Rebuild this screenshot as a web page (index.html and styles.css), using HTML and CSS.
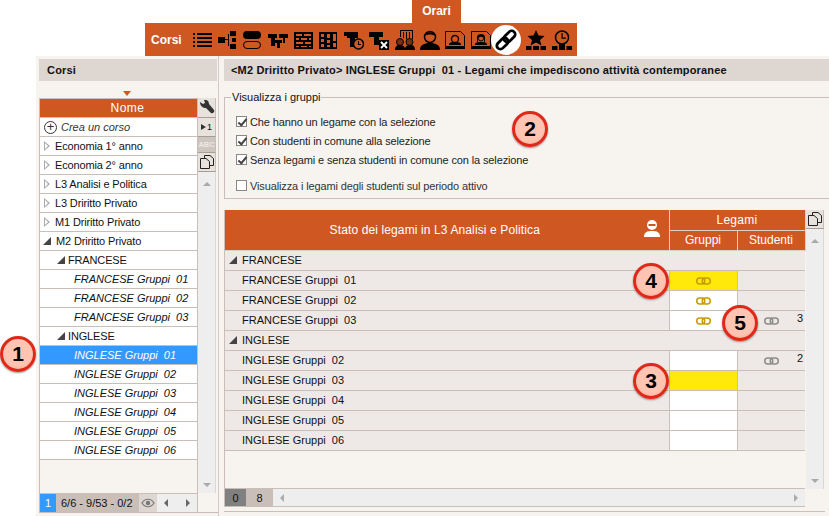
FILE: index.html
```html
<!DOCTYPE html>
<html lang="en">
<head>
    <meta charset="UTF-8">
    <title>Orari - Corsi</title>
    <link rel="stylesheet" href="styles.css">
</head>
<body>
    <svg class="defs" width="0" height="0">
        <symbol id="chain" viewBox="0 0 15 8">
            <rect x="0.75" y="1" width="8" height="6" rx="3" fill="none" stroke="currentColor" stroke-width="1.500"/>
            <rect x="6.25" y="1" width="8" height="6" rx="3" fill="none" stroke="currentColor" stroke-width="1.500"/>
        </symbol>
        <symbol id="copy" viewBox="0 0 14 14">
            <path d="M4.500 3.500V.5H10L13.500 3.500V10.500H9.500M.5 3.500H6L9.500 6.500V13.500H.5Z" fill="none" stroke="#222"/>
        </symbol>
    </svg>

    <div class="top">
        <div class="tab">Orari</div>
        <div class="toolbar">
            <span class="toolbar-title">Corsi</span>
            <!-- liste -->
            <svg class="tool" viewBox="0 0 20 20"><path d="M1 3h2v2H1zM5 3h15v2H5zM1 7h2v2H1zM5 7h15v2H5zM1 11h2v2H1zM5 11h15v2H5zM1 15h2v2H1zM5 15h15v2H5z"/></svg>
            <svg class="tool" viewBox="0 0 20 20"><path d="M1 7h7v6H1zM8 9h4v1H8zM11 4h1v12h-1zM13 1h6v5h-6zM15 8h4v4h-4zM13 14h6v5h-6z"/></svg>
            <svg class="tool" viewBox="0 0 20 20"><rect x="1" y="1" width="18" height="8" rx="4"/><rect x="1.500" y="11.500" width="17" height="7" rx="3.500" fill="none" stroke="#000"/></svg>
            <svg class="tool" viewBox="0 0 20 20"><path d="M0 4h9v4H7v8H3V8H0zM11 4h9v4h-3v5h-2V8h-4zM7 10h7v3h-2v5H9v-5H7z"/></svg>
            <svg class="tool" viewBox="0 0 20 20"><path d="M1 2h19v17H1zM3 4v2h6V4zM11 4v2h7V4zM3 8v2h3V8zM8 8v2h6V8zM16 8v2h2V8zM3 12v2h7v-2zM12 12v2h6v-2zM3 16v1h3v-1zM8 16v1h6v-1zM16 16v1h2v-1z" fill-rule="evenodd"/></svg>
            <svg class="tool" viewBox="0 0 20 20"><path d="M1 2h18v17H1zM3 4v3h3V4zM9 4v4h3V4zM15 4v7h3V4zM3 9v3h3V9zM9 10v3h3v-3zM3 14v3h3v-3zM9 15v2h3v-2zM15 13v4h3v-4z" fill-rule="evenodd"/></svg>
            <svg class="tool" viewBox="0 0 20 20"><path d="M0 2h14v6h-3v9H6V8H3V6H0z"/><circle cx="14.500" cy="14" r="5" fill="#cf5722" stroke="#000" stroke-width="1.500"/><path d="M14 11h1v3h2v1h-3z"/></svg>
            <svg class="tool" viewBox="0 0 20 20"><path d="M0 2h14v5h-4v8H5V7H0z"/><path d="M10 10h10v10H10z"/><path d="M12 12l6 6M18 12l-6 6" stroke="#fff" stroke-width="1.800"/></svg>
            <svg class="tool" viewBox="0 0 20 20"><path d="M5 0h13v9h-1V1H6v6H5zM8 2h1v6H8zM11 2h1v7h-1zM14 2h1v7h-1z"/><circle cx="5" cy="12" r="3.500" fill="#7a2e10" stroke="#000"/><circle cx="14.500" cy="12" r="3.500" fill="#7a2e10" stroke="#000"/><path d="M0 20c0-4 2-5 5-5s4 1 5 3c1-2 2-3 5-3s5 1 5 5z"/></svg>
            <svg class="tool" viewBox="0 0 20 20"><circle cx="10" cy="7" r="5.500" fill="#cf5722" stroke="#000" stroke-width="1.500"/><path d="M4.500 6c1-5 10-5 11 0-3-2-8-2-11 0z"/><path d="M0 20c0-5 4-7 10-7s10 2 10 7z"/></svg>
            <svg class="tool" viewBox="0 0 20 20"><path d="M.5 1.500h15l4 4v11H.5z" fill="#cf5722" stroke="#000"/><circle cx="10" cy="9" r="3.500" fill="none" stroke="#000" stroke-width="1.300"/><path d="M4 15c0-3 3-3 6-3s6 0 6 3z"/><path d="M0 17h20v2H0z"/></svg>
            <svg class="tool" viewBox="0 0 20 20"><path d="M.5 1.500h15l4 4v11H.5z" fill="#cf5722" stroke="#000"/><path d="M6 12V7c0-4 8-4 8 0v5h-1V8c0-2-6-2-6 0v4z"/><circle cx="10" cy="8.500" r="2.500" fill="none" stroke="#000"/><path d="M4 15c0-3 3-3 6-3s6 0 6 3z"/><path d="M0 17h20v2H0z"/></svg>
            <span class="tool-active">
                <svg width="24" height="24" viewBox="0 0 24 24"><g transform="rotate(-45 12 12)" fill="none" stroke="#000" stroke-width="2.800"><rect x="0.500" y="8.500" width="13" height="7" rx="3.500"/><rect x="10.500" y="8.500" width="13" height="7" rx="3.500"/></g></svg>
            </span>
            <svg class="tool" viewBox="0 0 20 20"><path d="M10 0l2.500 5.500 6 .5-4.500 4 1.500 5.500-5.500-3-5.500 3L6 10 1.500 6l6-.5zM0 16h5.500v4H0zM7 16h6v4H7zM14.500 16H20v4h-5.500z"/></svg>
            <svg class="tool" viewBox="0 0 20 20"><circle cx="10" cy="7.500" r="6.500" fill="none" stroke="#000" stroke-width="1.500"/><path d="M9.500 3h1.200v4.500H14v1.200H9.500zM0 16h5.500v4H0zM7 16h6v4H7zM14.500 16H20v4h-5.500zM7 13.500h6V16H7z"/></svg>
        </div>
    </div>

    <div class="main">
        <div class="left">
            <div class="panel-title">Corsi</div>
            <div class="sort-arrow"></div>
            <div class="list-wrap">
                <div class="list">
                    <div class="list-head">Nome</div>
                    <div class="list-body">
                        <div class="row create"><span class="plus">+</span>Crea un corso</div>
                        <div class="row"><span class="tri-open"></span>Economia 1° anno</div>
                        <div class="row"><span class="tri-open"></span>Economia 2° anno</div>
                        <div class="row"><span class="tri-open"></span>L3 Analisi e Politica</div>
                        <div class="row"><span class="tri-open"></span>L3 Driritto Privato</div>
                        <div class="row"><span class="tri-open"></span>M1 Driritto Privato</div>
                        <div class="row"><span class="tri-down"></span>M2 Driritto Privato</div>
                        <div class="row sub"><span class="tri-down"></span>FRANCESE</div>
                        <div class="row group">FRANCESE Gruppi&nbsp; 01</div>
                        <div class="row group">FRANCESE Gruppi&nbsp; 02</div>
                        <div class="row group">FRANCESE Gruppi&nbsp; 03</div>
                        <div class="row sub"><span class="tri-down"></span>INGLESE</div>
                        <div class="row group selected">INGLESE Gruppi&nbsp; 01</div>
                        <div class="row group">INGLESE Gruppi&nbsp; 02</div>
                        <div class="row group">INGLESE Gruppi&nbsp; 03</div>
                        <div class="row group">INGLESE Gruppi&nbsp; 04</div>
                        <div class="row group">INGLESE Gruppi&nbsp; 05</div>
                        <div class="row group">INGLESE Gruppi&nbsp; 06</div>
                    </div>
                    <div class="list-foot">
                        <span class="foot-num">1</span>
                        <span class="foot-count">6/6 - 9/53 - 0/2</span>
                        <span class="foot-eye">
                            <svg width="14" height="10" viewBox="0 0 14 10"><path d="M1 5c3-5 9-5 12 0-3 5-9 5-12 0z" fill="none" stroke="#777" stroke-width="1.200"/><circle cx="7" cy="5" r="2.200" fill="#777"/></svg>
                        </span>
                        <span class="foot-scroll"><i class="arrow-left"></i><i class="arrow-right"></i></span>
                    </div>
                </div>
                <div class="side">
                    <div class="side-btn wrench">
                        <svg width="16" height="15" viewBox="0 0 16 15"><path d="M1 2l3 2 2-1-1-3c3-.5 5 1 5 4l5 6c1 2-1 4-3 3L7 8C4 8 1 6 1 2z" fill="#333"/></svg>
                    </div>
                    <div class="side-btn"><span class="play-one"><i></i>1</span></div>
                    <div class="side-btn abc">ABC</div>
                    <div class="side-btn"><svg width="14" height="14"><use href="#copy"/></svg></div>
                    <div class="vscroll"><i class="arrow-up"></i><i class="arrow-down"></i></div>
                </div>
            </div>
        </div>

        <div class="right">
            <div class="panel-title detail-title">&lt;M2 Driritto Privato&gt; INGLESE Gruppi&nbsp; 01 - Legami che impediscono attività contemporanee</div>
            <div class="groupbox">
                <span class="legend">Visualizza i gruppi</span>
                <label class="check"><span class="box on"></span>Che hanno un legame con la selezione</label>
                <label class="check"><span class="box on"></span>Con studenti in comune alla selezione</label>
                <label class="check"><span class="box on"></span>Senza legami e senza studenti in comune con la selezione</label>
                <label class="check last"><span class="box"></span>Visualizza i legami degli studenti sul periodo attivo</label>
            </div>

            <div class="grid-wrap">
                <div class="grid-area">
                    <table class="grid">
                        <colgroup><col class="col-name"><col class="col-gr"><col class="col-st"></colgroup>
                        <thead>
                            <tr>
                                <th rowspan="2" class="th-main">
                                    <span class="th-text">Stato dei legami in L3 Analisi e Politica</span>
                                    <svg class="th-icon" width="18" height="18" viewBox="0 0 18 18"><circle cx="9" cy="6" r="5" fill="#fff"/><path d="M5.500 5h7v2h-7z" fill="#cf5722"/><path d="M1 18c0-5 3-6 8-6s8 1 8 6z" fill="#fff"/></svg>
                                </th>
                                <th colspan="2" class="th-top">Legami</th>
                            </tr>
                            <tr><th>Gruppi</th><th>Studenti</th></tr>
                        </thead>
                        <tbody>
                            <tr class="section"><td colspan="3"><span class="tri-down"></span>FRANCESE</td></tr>
                            <tr><td class="name">FRANCESE Gruppi&nbsp; 01</td><td class="yellow"><svg class="chain gold"><use href="#chain"/></svg></td><td></td></tr>
                            <tr><td class="name">FRANCESE Gruppi&nbsp; 02</td><td class="white"><svg class="chain gold"><use href="#chain"/></svg></td><td></td></tr>
                            <tr><td class="name">FRANCESE Gruppi&nbsp; 03</td><td class="white"><svg class="chain gold"><use href="#chain"/></svg></td><td class="students"><svg class="chain grey"><use href="#chain"/></svg><span class="count">3</span></td></tr>
                            <tr class="section"><td colspan="3"><span class="tri-down"></span>INGLESE</td></tr>
                            <tr><td class="name">INGLESE Gruppi&nbsp; 02</td><td class="white"></td><td class="students"><svg class="chain grey"><use href="#chain"/></svg><span class="count">2</span></td></tr>
                            <tr><td class="name">INGLESE Gruppi&nbsp; 03</td><td class="yellow"></td><td></td></tr>
                            <tr><td class="name">INGLESE Gruppi&nbsp; 04</td><td class="white"></td><td></td></tr>
                            <tr><td class="name">INGLESE Gruppi&nbsp; 05</td><td class="white"></td><td></td></tr>
                            <tr><td class="name">INGLESE Gruppi&nbsp; 06</td><td class="white"></td><td></td></tr>
                        </tbody>
                    </table>
                    <div class="grid-foot">
                        <span class="num-dark">0</span>
                        <span class="num-light">8</span>
                        <span class="hscroll"><i class="arrow-left"></i><i class="arrow-right"></i></span>
                    </div>
                </div>
                <div class="side grid-side">
                    <div class="side-btn"><svg width="14" height="14"><use href="#copy"/></svg></div>
                    <div class="vscroll"><i class="arrow-up"></i><i class="arrow-down"></i></div>
                </div>
            </div>
        </div>
    </div>

    <div class="badge b1">1</div>
    <div class="badge b2">2</div>
    <div class="badge b3">3</div>
    <div class="badge b4">4</div>
    <div class="badge b5">5</div>
</body>
</html>
```

FILE: styles.css
```css
* {
    margin: 0;
    padding: 0;
    box-sizing: border-box;
}

body {
    font-family: 'Liberation Sans', Arial, sans-serif;
    font-size: 11px;
    color: #111;
    background: white;
    width: 829px;
    height: 516px;
    overflow: hidden;
    position: relative;
}

.defs {
    position: absolute;
}

/* top bar */
.top {
    height: 56px;
    padding-left: 145px;
}

.tab {
    width: 49px;
    height: 23px;
    margin-left: 267px;
    padding-top: 4px;
    background: #cf5722;
    color: white;
    font-size: 12px;
    font-weight: bold;
    text-align: center;
}

.toolbar {
    width: 432px;
    height: 33px;
    background: #cf5722;
    display: flex;
    align-items: center;
    padding-left: 6px;
}

.toolbar-title {
    width: 40.5px;
    color: white;
    font-size: 12px;
    font-weight: bold;
}

.tool {
    width: 20px;
    height: 20px;
    margin-right: 5.4px;
    flex: none;
}

.tool-active {
    width: 30px;
    height: 30px;
    margin: 0 5px 0 -5px;
    flex: none;
    background: white;
    border-radius: 50%;
    display: flex;
    align-items: center;
    justify-content: center;
}

/* main panels */
.main {
    display: flex;
    height: 460px;
    margin-left: 36px;
    background: #f7f3ef;
}

.left {
    width: 183px;
    padding: 3px 0 0 3px;
    border-right: 1px solid #d3cbc5;
}

.right {
    flex: 1;
    padding: 3px 0 0 5px;
}

.panel-title {
    height: 22px;
    background: #ddd6d1;
    font-weight: bold;
    line-height: 22px;
    padding-left: 7px;
    margin-right: 1px;
}

.left .panel-title {
    padding-left: 8px;
    letter-spacing: 0.2px;
}

.detail-title {
    margin-right: 0;
    letter-spacing: 0.16px;
}

.sort-arrow {
    width: 0;
    height: 0;
    margin: 10px 0 0 84px;
    border-left: 4px solid transparent;
    border-right: 4px solid transparent;
    border-top: 5px solid #cf5722;
}

.list-wrap {
    display: flex;
    height: 415px;
    margin-top: 2px;
    border-bottom: 1px solid #c9bfb8;
}

.list {
    width: 159px;
    display: flex;
    flex-direction: column;
    border-left: 1px solid #c9bfb8;
    border-right: 1px solid #c9bfb8;
}

.list-head {
    height: 20px;
    background: #cf5722;
    color: white;
    font-size: 12px;
    letter-spacing: 0.5px;
    line-height: 19px;
    text-align: center;
    padding-left: 18px;
    border-top: 1px solid #c9bfb8;
    border-bottom: 1px solid #c9bfb8;
}

.list-body {
    flex: 1;
}

.row {
    height: 19px;
    line-height: 18px;
    background: white;
    border-bottom: 1px solid #c9bfb8;
    white-space: nowrap;
    padding-left: 4px;
    letter-spacing: -0.15px;
    display: flex;
    align-items: center;
}

.create {
    font-style: italic;
    color: #333;
    letter-spacing: 0;
}

.plus {
    width: 13px;
    height: 13px;
    margin-right: 4px;
    border: 1px solid #333;
    border-radius: 50%;
    font-style: normal;
    font-size: 13px;
    line-height: 10px;
    text-align: center;
}

/* outlined triangle: grey one with a smaller white one on top */
.tri-open {
    position: relative;
    width: 0;
    height: 0;
    margin-right: 5px;
    border-left: 6px solid #aaa;
    border-top: 5px solid transparent;
    border-bottom: 5px solid transparent;
}

.tri-open::after {
    content: "";
    position: absolute;
    left: -5px;
    top: -3px;
    border-left: 3px solid white;
    border-top: 3px solid transparent;
    border-bottom: 3px solid transparent;
}

.tri-down {
    width: 0;
    height: 0;
    margin-right: 3px;
    border-bottom: 8px solid #444;
    border-left: 8px solid transparent;
}

.row > .tri-down {
    margin-left: -1px;
    margin-right: 5px;
}

.sub {
    padding-left: 18px;
}

.sub > .tri-down {
    margin-right: 3px;
}

.group {
    padding-left: 34px;
    font-style: italic;
    letter-spacing: 0;
}

.selected {
    background: #3399ff;
    color: white;
}

.list-foot {
    height: 19px;
    display: flex;
    align-items: stretch;
    line-height: 18px;
    border-top: 1px solid #c9bfb8;
}

.foot-num {
    width: 16px;
    background: #3399ff;
    color: white;
    text-align: center;
}

.foot-count {
    width: 83px;
    background: #c9bfb8;
    padding-left: 5px;
    white-space: nowrap;
}

.foot-eye {
    width: 18px;
    background: #ddd6d1;
    display: flex;
    align-items: center;
    justify-content: center;
}

.foot-scroll {
    flex: 1;
    background: #eeeeee;
    display: flex;
    align-items: center;
    justify-content: space-between;
    padding: 0 7px;
}

/* side buttons and scrollbars */
.side {
    width: 18px;
    display: flex;
    flex-direction: column;
}

.side-btn {
    height: 19px;
    background: #e8e2dd;
    border-bottom: 1px solid #a89e96;
    border-right: 1px solid #c9bfb8;
    display: flex;
    align-items: center;
    justify-content: center;
    flex: none;
}

.wrench {
    height: 20px;
}

.play-one {
    font-size: 9px;
    display: flex;
    align-items: center;
    gap: 1px;
}

.play-one i {
    border-left: 5px solid #333;
    border-top: 3px solid transparent;
    border-bottom: 3px solid transparent;
}

.abc {
    background: #cdc5bf;
    color: #eee8e3;
    font-size: 7.5px;
    font-weight: bold;
    height: 16px;
}

.vscroll {
    flex: 1;
    margin-bottom: 19px;
    background: #eeeeee;
    border-right: 1px solid #d8d8d8;
    display: flex;
    flex-direction: column;
    justify-content: space-between;
    align-items: center;
    padding: 10px 0 6px;
}

.arrow-up {
    border-bottom: 4px solid #aaa;
    border-left: 4px solid transparent;
    border-right: 4px solid transparent;
}

.arrow-down {
    border-top: 4px solid #aaa;
    border-left: 4px solid transparent;
    border-right: 4px solid transparent;
}

.arrow-left {
    border-right: 4px solid #666;
    border-top: 4px solid transparent;
    border-bottom: 4px solid transparent;
}

.arrow-right {
    border-left: 4px solid #666;
    border-top: 4px solid transparent;
    border-bottom: 4px solid transparent;
}

/* group box */
.groupbox {
    position: relative;
    height: 102px;
    margin-top: 16px;
    padding: 14px 0 0 11px;
    border: 1px solid #c9bfb8;
    border-right: none;
}

.legend {
    position: absolute;
    top: -7px;
    left: 6px;
    padding: 0 1px;
    background: #f7f3ef;
}

.check {
    display: flex;
    align-items: center;
    height: 19px;
    color: #222;
    letter-spacing: -0.13px;
}

.check.last {
    margin-top: 7px;
    color: #333;
}

.box {
    width: 11px;
    height: 11px;
    margin-right: 3px;
    background: white;
    border: 1px solid #888;
    position: relative;
}

.box.on::after {
    content: "";
    position: absolute;
    left: 3px;
    top: 0;
    width: 3px;
    height: 7px;
    border: solid #444;
    border-width: 0 2px 2px 0;
    transform: rotate(40deg);
}

/* legami grid */
.grid-wrap {
    display: flex;
    margin-top: 11px;
    padding-bottom: 4px;
    border-bottom: 1px solid #c9bfb8;
    margin-right: 4px;
    height: 302px;
}

.grid-area {
    width: 581px;
    display: flex;
    flex-direction: column;
    border-left: 1px solid #c9bfb8;
}

.grid {
    width: 580px;
    table-layout: fixed;
    border-collapse: collapse;
    flex: none;
}

.col-name {
    width: 444px;
}

.col-gr {
    width: 68px;
}

.col-st {
    width: 68px;
}

.grid th {
    height: 20px;
    background: #cf5722;
    color: white;
    font-weight: normal;
    font-size: 12px;
    border: 1px solid #ddd0c8;
    border-top: none;
}

.grid .th-top {
    letter-spacing: 0.3px;
}

.grid .th-main {
    height: 40px;
    font-size: 12px;
    letter-spacing: 0.12px;
    position: relative;
    padding-right: 24px;
    border-left: none;
}

.th-icon {
    position: absolute;
    right: 8px;
    top: 9px;
}

.grid td {
    height: 20px;
    background: #eee9e6;
    border: 1px solid #c9bfb8;
    border-left: none;
    text-align: center;
    padding: 0;
    white-space: nowrap;
}

.grid td:last-child {
    border-right: none;
    position: relative;
}

.grid td.name {
    text-align: left;
    padding-left: 17px;
}

.grid td.white {
    background: white;
}

.grid td.yellow {
    background: #ffe90a;
}

.section td {
    text-align: left !important;
    padding-left: 4px !important;
}

.section .tri-down {
    display: inline-block;
    margin-right: 5px;
}

.chain {
    width: 15px;
    height: 8px;
    display: inline-block;
    vertical-align: middle;
}

.gold {
    color: #c79a00;
}

.grey {
    color: #8c8c8c;
}

.count {
    position: absolute;
    right: 2px;
    top: 1px;
}

.grid-foot {
    margin-top: auto;
    height: 19px;
    display: flex;
    line-height: 18px;
    border-top: 1px solid #c9bfb8;
    border-bottom: 1px solid #c9bfb8;
}

.num-dark {
    width: 21px;
    background: #808080;
    text-align: center;
}

.num-light {
    width: 27px;
    background: #c9bfb8;
    text-align: center;
}

.hscroll {
    flex: 1;
    background: #eeeeee;
    display: flex;
    align-items: center;
    justify-content: space-between;
    padding: 0 7px;
}

.hscroll .arrow-left,
.hscroll .arrow-right {
    border-left-color: #aaa;
    border-right-color: #aaa;
}

.grid-side {
    margin-left: 1px;
}

.grid-side .vscroll {
    margin-bottom: 18px;
}

/* numbered callouts */
.badge {
    position: absolute;
    width: 36px;
    height: 36px;
    border-radius: 50%;
    background: radial-gradient(circle at 50% 45%, #ffc4b2 60%, #f59c84 100%);
    border: 3px solid #e0281a;
    box-shadow: 0 1px 2px rgba(0,0,0,0.4);
    color: black;
    font-size: 21px;
    font-weight: bold;
    line-height: 30px;
    text-align: center;
}

.b1 { left: 0; top: 336px; }
.b2 { left: 512px; top: 111px; }
.b3 { left: 633px; top: 363px; }
.b4 { left: 633px; top: 263px; }
.b5 { left: 722px; top: 305px; }
```
